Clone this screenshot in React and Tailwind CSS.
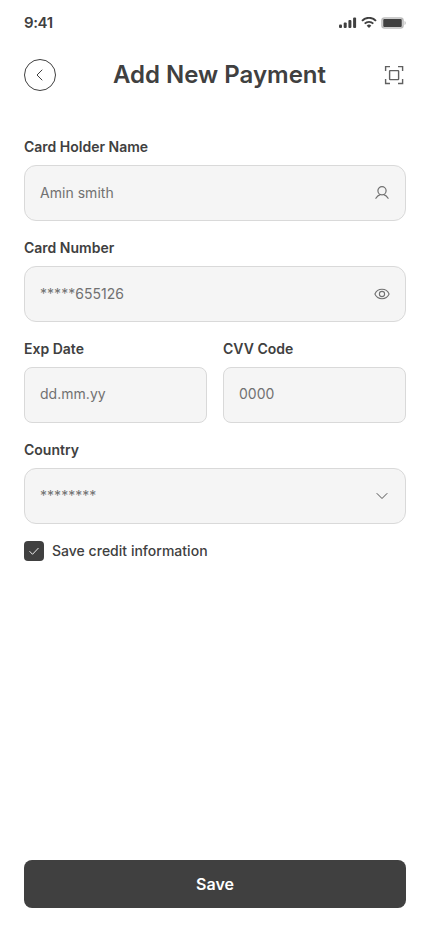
const Field = ({ label, value, icon, rounded = 'rounded-xl', valueClass = '' }) => (
  <label className="flex flex-1 flex-col gap-2">
    <span className="text-sm leading-[21px] font-semibold">{label}</span>
    <span className={`flex h-14 items-center justify-between border border-[#d9d9d9] bg-[#f5f5f5] px-[15px] ${rounded}`}>
      <span className={`text-sm tracking-[0.03px] text-[#717171] ${valueClass}`}>{value}</span>
      {icon}
    </span>
  </label>
);

const UserIcon = () => (
  <svg width="16" height="16" viewBox="0 0 16 16" fill="none" stroke="#707070" strokeWidth="1.2" strokeLinecap="round" strokeLinejoin="round">
    <circle cx="8" cy="5.800" r="4.100" />
    <path d="M1.900 13.300c1-1.700 2.500-3 4.300-3.700M14.100 13.300c-1-1.700-2.500-3-4.300-3.700" />
  </svg>
);

const EyeIcon = () => (
  <svg width="16" height="16" viewBox="0 0 16 16" fill="none" stroke="#707070" strokeWidth="1.1" strokeLinecap="round" strokeLinejoin="round">
    <path d="M.9 8C2.100 5.200 4.700 3.300 8 3.300s5.900 1.900 7.100 4.700c-1.200 2.800-3.800 4.700-7.100 4.700S2.100 10.800.9 8Z" />
    <circle cx="8" cy="8" r="2.600" />
  </svg>
);

const ChevronDownIcon = () => (
  <svg width="16" height="16" viewBox="0 0 16 16" fill="none" stroke="#505050" strokeLinecap="round" strokeLinejoin="round">
    <path d="m3 5.500 5 5 5-5" />
  </svg>
);

const StatusBar = () => (
  <div className="flex h-[46px] items-center justify-between">
    <span className="text-[15px] font-semibold tracking-[-0.4px]">9:41</span>
    <div className="flex items-center gap-1">
      <svg width="18" height="12" viewBox="0 0 18 12" fill="#404040">
        <rect x="0" y="7.500" width="3" height="3.500" rx="1" />
        <rect x="4.700" y="5.500" width="3" height="5.500" rx="1" />
        <rect x="9.400" y="3" width="3" height="8" rx="1" />
        <rect x="14.100" y=".5" width="3" height="10.500" rx="1" />
      </svg>
      <svg width="16" height="12" viewBox="0 0 16 12" fill="none" stroke="#404040" strokeWidth="1.900">
        <path d="M1 3.800a9.700 9.700 0 0 1 14 0M3.700 6.700a6 6 0 0 1 8.600 0" />
        <path d="M5.700 8.700a3.300 3.300 0 0 1 4.600 0L8 11.100Z" fill="#404040" stroke="none" />
      </svg>
      <svg width="25" height="12" viewBox="0 0 25 12" fill="#404040">
        <rect x="1" y="1" width="21" height="10" rx="2.500" fill="none" stroke="#bdbdbd" strokeWidth="1.600" />
        <rect x="2.200" y="2" width="18.600" height="8" rx="1" />
        <path d="M23.500 4v4c.8-.3 1.300-1.100 1.300-2s-.5-1.700-1.300-2Z" fill="#c4c4c4" />
      </svg>
    </div>
  </div>
);

const App = () => (
  <div className="flex h-screen w-full flex-col bg-white px-6 pb-6 font-['Inter',sans-serif] text-[#404040]">
    <StatusBar />

    {/* header */}
    <header className="mt-[13px] flex h-8 items-center justify-between">
      <button className="flex size-8 items-center justify-center rounded-full border border-[#404040]">
        <svg width="16" height="16" viewBox="0 0 16 16" fill="none" stroke="#404040" strokeLinecap="round" strokeLinejoin="round">
          <path d="M10 3 5 8l5 5" />
        </svg>
      </button>
      <h1 className="pl-px text-2xl font-semibold">Add New Payment</h1>
      <svg width="24" height="24" viewBox="0 0 24 24" fill="none" stroke="#606060" strokeWidth="1.400">
        <path d="M3.600 8V3.600H8M16 3.600h4.600V8M20.600 16v4.500H16M8 20.500H3.600V16" />
        <rect x="7.600" y="7.600" width="9" height="9" rx=".5" />
      </svg>
    </header>

    {/* card details */}
    <form className="mt-[45px] flex flex-col gap-4">
      <Field label="Card Holder Name" value="Amin smith" icon={<UserIcon />} />
      <Field label="Card Number" value="*****655126" icon={<EyeIcon />} />
      <div className="flex gap-4">
        <Field label="Exp Date" value="dd.mm.yy" rounded="rounded-lg" valueClass="pb-0.5" />
        <Field label="CVV Code" value="0000" rounded="rounded-lg" valueClass="pb-0.5" />
      </div>
      <Field label="Country" value="********" icon={<ChevronDownIcon />} />
      <div className="flex items-center gap-2 pt-[0.5px]">
        <span className="flex size-5 items-center justify-center rounded bg-[#404040]">
          <svg width="12" height="12" viewBox="0 0 12 12" fill="none" stroke="white" strokeWidth=".9" strokeLinecap="round" strokeLinejoin="round">
            <path d="m1.800 6.500 2.700 2.800L10.200 3.300" />
          </svg>
        </span>
        <span className="text-sm leading-5 font-medium tracking-[0.02px]">Save credit information</span>
      </div>
    </form>

    <button className="mt-auto h-12 rounded-lg bg-[#404040] font-semibold text-white">Save</button>
  </div>
);

export default App;
